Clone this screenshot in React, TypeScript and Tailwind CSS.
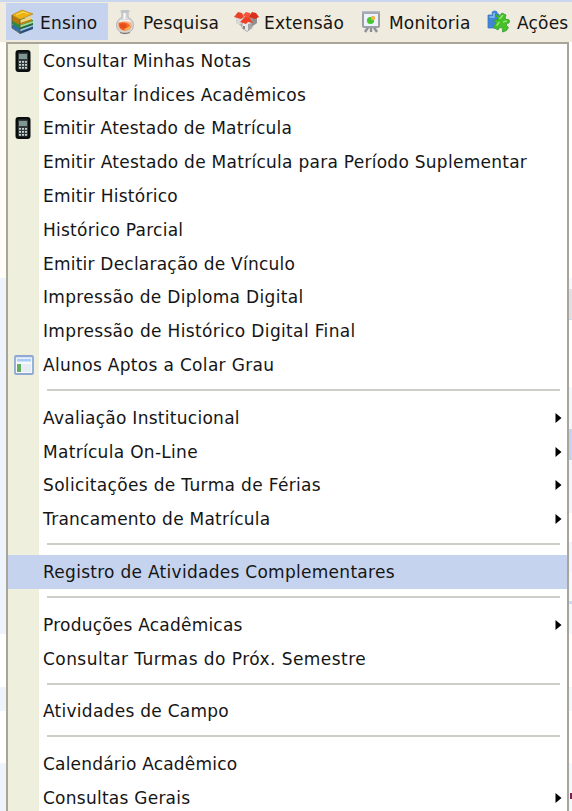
import React from "react";

interface MenuItem {
  label: string;
  tracking: string;
  icon?: React.ReactElement;
  submenu?: boolean;
  active?: boolean;
}

const BooksIcon = () => (
  <svg width="24" height="26" viewBox="0 0 24 26">
    <path d="M1 16 13 12 22 15 22 19 9 24 1 19Z" fill="#2f6fb0" />
    <path d="M9 20 22 15v3L9 23Z" fill="#9fc4e4" />
    <path d="M9 22.500 22 17.500v2.500L9 25Z" fill="#264f7c" />
    <path d="M1 12 13 9 22 11 22 15 9 20 1 15Z" fill="#2f8a43" />
    <path d="M9 16.500 22 12v2.500L9 19Z" fill="#9fdc96" />
    <path d="M9 18.500 22 14v2L9 20.500Z" fill="#23673c" />
    <path d="M1 6 9 10v6L1 12Z" fill="#b87809" />
    <path d="M9 11 21 7v4.500L9 16Z" fill="#eed67c" />
    <path d="M9 14 21 10v2L9 16Z" fill="#b98012" />
    <path d="M1 6 11 1 22 5 9 10.500Z" fill="#eeb211" stroke="#a87a1a" strokeWidth=".6" />
    <path d="M5 6 12 3l5 1.500" stroke="#f9d75a" strokeWidth="1.200" fill="none" />
    <path d="M1 6v13l8 5.500V10.500" stroke="#5b5a3a" strokeWidth=".8" fill="none" />
  </svg>
);

const FlaskIcon = () => (
  <svg width="20" height="26" viewBox="0 0 20 26">
    <path d="M7 3v5.500A8.500 8.200 0 1 0 13 8.500V3Z" fill="#d6d7d8" stroke="#b4b5b7" strokeWidth="1" />
    <ellipse cx="10" cy="16.500" rx="6.800" ry="5.500" fill="#f8b183" />
    <path d="M3.500 14Q8 12.500 13 14.500L16 18Q13 21.500 9 21.500 4 20.500 3.500 14Z" fill="#f26a2a" />
    <ellipse cx="8" cy="17" rx="3.500" ry="2.800" fill="#ea4d17" />
    <path d="M10 20.500Q13.500 20 15 17.500" stroke="#ffc14f" strokeWidth="1.600" fill="none" />
    <path d="M4.500 12.500Q10 10.500 15.500 12.500" stroke="#f7f3ef" strokeWidth="1.500" fill="none" />
    <rect x="5.500" y="1" width="9" height="2.500" rx="1.200" fill="#c3c7cc" />
    <path d="M9.500 4v6" stroke="#fff" strokeWidth="1.600" />
    <path d="M5 23.500Q10 25.500 15 23.500" stroke="#877b76" strokeWidth="1.300" fill="none" />
  </svg>
);

const HousesIcon = () => (
  <svg width="25" height="22" viewBox="0 0 25 22">
    <path d="M2 6h21v6l-10 8L2 11Z" fill="#b9b9b9" />
    <path d="M2 6h7v7H2.500Z" fill="#d9d9d9" />
    <path d="M17 6h6v6l-5 3Z" fill="#8f8f8f" />
    <path d="m0 6 4-5 4 1 2 4-3 2Z" fill="#e9432b" />
    <path d="m9 4 3-3 4 1 2 4-5 2Z" fill="#f4563a" />
    <path d="m15 6 3-5 4 1 3 4-4 2Z" fill="#dc2f1b" />
    <path d="M8 12 13 9l5 3v5l-5 3.500L8 17Z" fill="#e8e8e8" stroke="#858585" strokeWidth=".6" />
    <path d="m6 11 5-5 5 1 3 5-5-1-2 2Z" fill="#ee4027" />
    <path d="M14 13v6.500l4-3v-4.500Z" fill="#a5a5a5" />
    <path d="M10 15v3" stroke="#696969" strokeWidth="1.500" />
  </svg>
);

const BoardIcon = () => (
  <svg width="21" height="24" viewBox="0 0 21 24">
    <path d="M10 16v6M8 16l-4 6M12 16l4 6" stroke="#8d9096" strokeWidth="2.400" />
    <rect x="2" y="3" width="16" height="14" rx="1" fill="#eef2fa" stroke="#9a9ea9" strokeWidth="2" />
    <path d="M1 2.500h18" stroke="#a8acb8" strokeWidth="2.500" />
    <circle cx="9.500" cy="10.500" r="3.600" fill="#43c82d" />
    <circle cx="12" cy="8" r="2.200" fill="#f1b64b" />
  </svg>
);

const PuzzleIcon = () => (
  <svg width="23" height="24" viewBox="0 0 23 24">
    <path d="M1 5h4.500Q4 1 7.500 1T10 4h2v14H1Z" fill="#3f86d6" stroke="#3a78c4" strokeWidth=".8" />
    <path d="M2.500 7h4.500V3" stroke="#8ebff0" strokeWidth="1.500" fill="none" />
    <path
      d="M8 5q3-1 4 1.500l3-3.500 4 2q-1.500 3 0 4.500 3-1 3.500 1.500t-3 2.500q-1 2 2 4l-2 3-4 1.500q1-4-1.500-4.500T11 20l-5-3 3-3.500Q6.500 11 8 10t3 0q0-3-3-5Z"
      fill="#45c02b"
      stroke="#2f9c24"
      strokeWidth=".8"
    />
    <path d="m12.500 9 3.500-4M9.500 15.500l3-3.500M16 12l4-1" stroke="#93e668" strokeWidth="1.600" fill="none" />
  </svg>
);

const CalculatorIcon = () => (
  <svg className="mr-[2px]" width="16" height="24" viewBox="0 0 16 24">
    <rect x=".5" y="1" width="15" height="22" rx="3" fill="#0b0e0e" />
    <rect x="3" y="3.500" width="10" height="17" rx="1" fill="#343b3b" />
    <rect x="4" y="5" width="8" height="5" fill="#7e9694" />
    <g fill="#c6d4d2">
      <path d="M4 12h2v1.700H4zM7 12h2v1.700H7zM10 12h2v1.700h-2z" />
      <path d="M4 15h2v1.700H4zM7 15h2v1.700H7zM10 15h2v1.700h-2z" />
      <path d="M4 18h2v1.700H4zM7 18h2v1.700H7zM10 18h2v1.700h-2z" />
    </g>
  </svg>
);

const WindowIcon = () => (
  <svg width="20" height="20" viewBox="0 0 20 20">
    <rect x="1" y="1" width="18" height="18" rx="1" fill="#f4f7fc" stroke="#8fa9d3" strokeWidth="1.800" />
    <path d="M2 2h16v1.500H2z" fill="#d5e4f8" />
    <path d="M3 4h14v2.500H3z" fill="#a8ccf3" />
    <path d="M3 9h4v8H3z" fill="#64ad5d" />
    <path d="M8 9h9v8H8z" fill="#e6ecf6" />
  </svg>
);

const tabs = [
  { label: "Ensino", icon: <BooksIcon />, className: "bg-[#c5d3ee] w-[102px] pl-[5px] gap-[5px]" },
  { label: "Pesquisa", icon: <FlaskIcon />, className: "w-[125px] pl-[7px] gap-[8px]" },
  { label: "Extensão", icon: <HousesIcon />, className: "w-[126px] pl-[1px] gap-[5px]" },
  { label: "Monitoria", icon: <BoardIcon />, className: "w-[124px] pl-[2px] gap-[7px]" },
  { label: "Ações", icon: <PuzzleIcon />, className: "w-[89px] pl-[4px] gap-[7px]" },
];

// Cada grupo é separado do próximo por uma linha
const groups: MenuItem[][] = [
  [
    { label: "Consultar Minhas Notas", tracking: "tracking-[0.3px]", icon: <CalculatorIcon /> },
    { label: "Consultar Índices Acadêmicos", tracking: "tracking-[0.31px]" },
    { label: "Emitir Atestado de Matrícula", tracking: "tracking-[0.25px]", icon: <CalculatorIcon /> },
    { label: "Emitir Atestado de Matrícula para Período Suplementar", tracking: "tracking-[0.27px]" },
    { label: "Emitir Histórico", tracking: "tracking-[0.27px]" },
    { label: "Histórico Parcial", tracking: "tracking-[0.25px]" },
    { label: "Emitir Declaração de Vínculo", tracking: "tracking-[0.22px]" },
    { label: "Impressão de Diploma Digital", tracking: "tracking-[0.33px]" },
    { label: "Impressão de Histórico Digital Final", tracking: "tracking-[0.35px]" },
    { label: "Alunos Aptos a Colar Grau", tracking: "tracking-[0.32px]", icon: <WindowIcon /> },
  ],
  [
    { label: "Avaliação Institucional", tracking: "tracking-[0.28px]", submenu: true },
    { label: "Matrícula On-Line", tracking: "tracking-[0.3px]", submenu: true },
    { label: "Solicitações de Turma de Férias", tracking: "tracking-[0.34px]", submenu: true },
    { label: "Trancamento de Matrícula", tracking: "tracking-[0.25px]", submenu: true },
  ],
  [{ label: "Registro de Atividades Complementares", tracking: "tracking-[0.28px]", active: true }],
  [
    { label: "Produções Acadêmicas", tracking: "tracking-[0.22px]", submenu: true },
    { label: "Consultar Turmas do Próx. Semestre", tracking: "tracking-[0.44px]" },
  ],
  [{ label: "Atividades de Campo", tracking: "tracking-[0.27px]" }],
  [
    { label: "Calendário Acadêmico", tracking: "tracking-[0.2px]" },
    { label: "Consultas Gerais", tracking: "tracking-[0.25px]", submenu: true },
  ],
];

const MenuRow: React.FC<{ item: MenuItem }> = ({ item }) => (
  <li className={`flex h-[33.8px] items-center ${item.active ? "bg-[#c5d3ee]" : ""}`}>
    <span className="flex w-[31px] shrink-0 justify-center">{item.icon}</span>
    <span className={`ml-[4px] flex-1 pt-px whitespace-nowrap ${item.tracking}`}>{item.label}</span>
    {item.submenu && (
      <svg className="mr-[5px]" width="7" height="10" viewBox="0 0 7 10">
        <path d="M.5 0 6.500 5 .5 10Z" fill="#000" />
      </svg>
    )}
  </li>
);

export default function App() {
  return (
    <div className="flex h-[811px] w-[572px] flex-col overflow-hidden bg-white font-['DejaVu_Sans',sans-serif] text-[17px] leading-none text-[#151515]">
      <nav className="flex h-[42px] shrink-0 border-t-2 border-[#c9d7ef] bg-[#efebde] pl-[6px]">
        {tabs.map((tab) => (
          <div key={tab.label} className={`mt-px flex h-[37px] shrink-0 items-center ${tab.className}`}>
            {tab.icon}
            <span className="pt-[3px] tracking-[0.2px]">{tab.label}</span>
          </div>
        ))}
      </nav>
      <div className="flex h-[769px]">
        <div className="flex w-[6px] shrink-0 flex-col bg-white">
          <div className="h-[236px] bg-[#fffdf7]" />
          <div className="h-[356px] bg-[#eff3fb]" />
          <div className="mt-[53px] h-[24px] bg-[#eff3fb]" />
          <div className="mt-[52px] flex-1 bg-[#eff3fb]" />
        </div>
        <div className="w-[563px] shrink-0 overflow-hidden border-2 border-b-0 border-[#aaa599] bg-white bg-linear-to-r from-[#efefde] from-[31px] to-white to-[31px]">
          {groups.map((group, i) => (
            <React.Fragment key={i}>
              {i > 0 && (
                <div className="h-[19px] pt-[7px] pr-[7px] pl-[39px]">
                  <div className="h-[2px] bg-[#cfcdc7]" />
                </div>
              )}
              <ul>
                {group.map((item) => (
                  <MenuRow key={item.label} item={item} />
                ))}
              </ul>
            </React.Fragment>
          ))}
        </div>
        <div className="flex w-[3px] shrink-0 flex-col">
          <div className="mt-[236px] h-[11px] bg-[#f3f8ff]" />
          <div className="h-[30px] bg-[#e0dfe5]" />
          <div className="h-px bg-[#c5d8f4]" />
          <div className="mt-[67px] h-[42px] bg-[#f0f7ff]" />
          <div className="h-[31px] bg-[#c5d3ee]" />
          <div className="h-[53px] bg-[#f0f5ff]" />
          <div className="mt-[29px] h-[30px] bg-[#f0f4ff]" />
          <div className="h-[29px] bg-[#f5faff]" />
          <div className="h-[3px] bg-[#c8dcf8]" />
          <div className="h-[30px] bg-[#f1f8ff]" />
          <div className="mt-[53px] h-[24px] bg-[#f1f8ff]" />
          <div className="mt-[52px] flex-1 bg-[#f1f8ff] pt-[30px] pl-px">
            <div className="h-[6px] w-[2px] bg-[#7b2058]" />
          </div>
        </div>
      </div>
    </div>
  );
}
